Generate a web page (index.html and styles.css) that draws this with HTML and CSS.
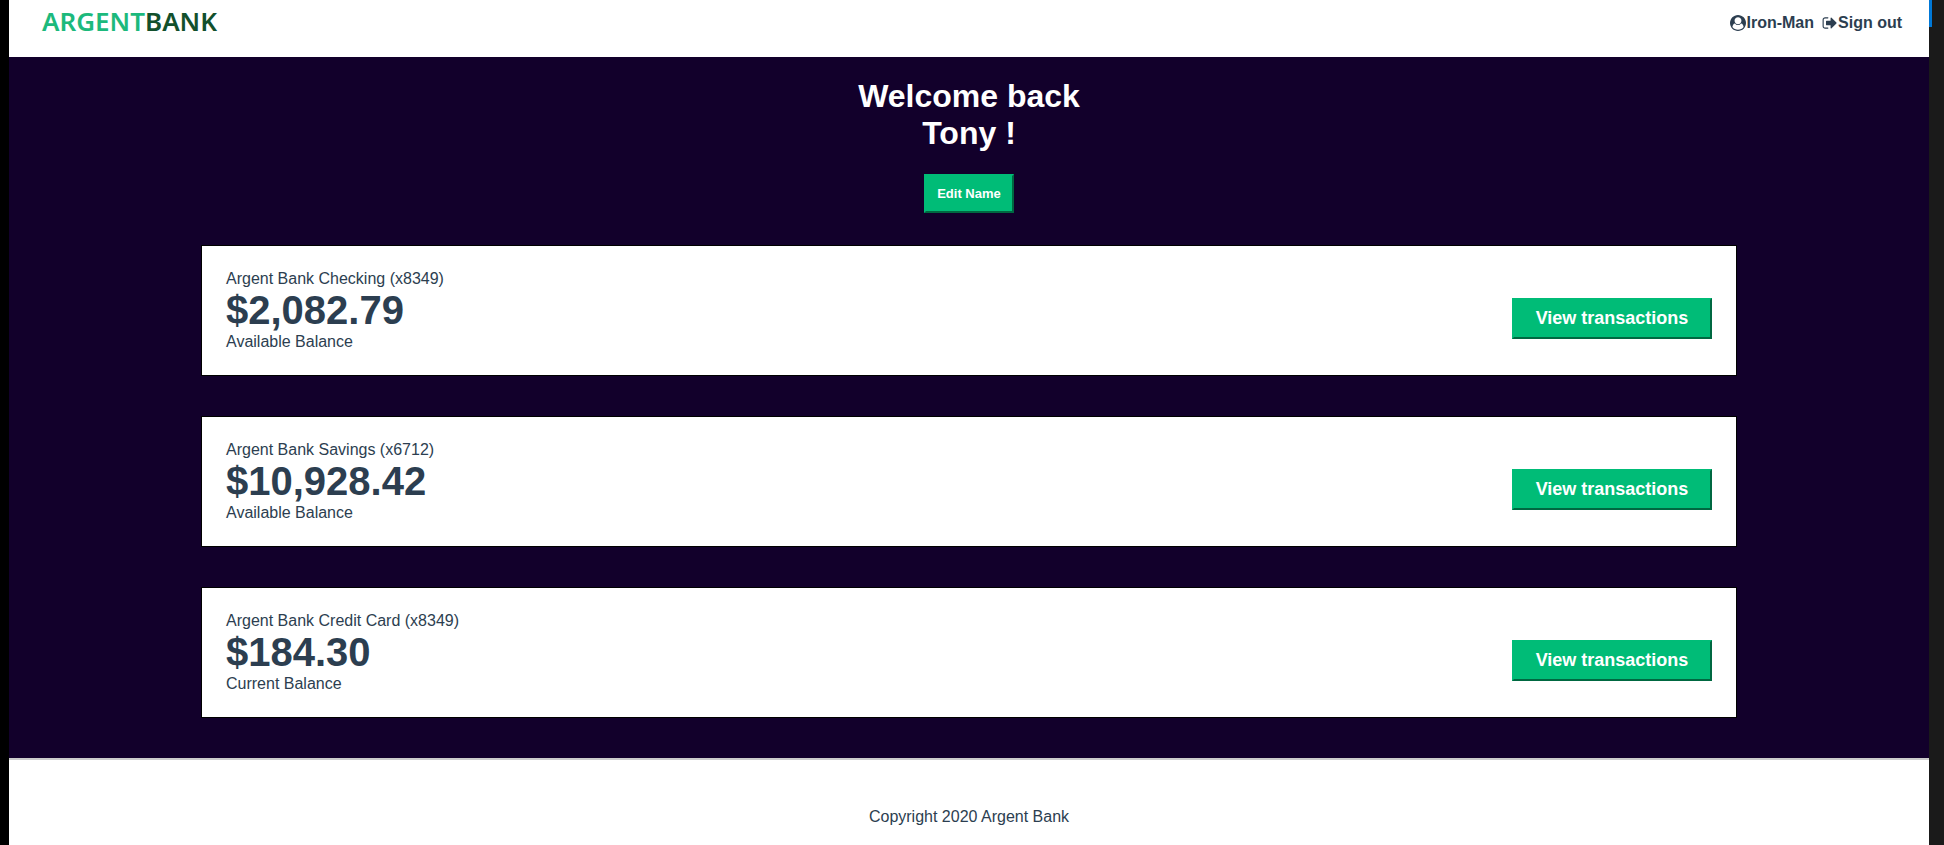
FILE: index.html
```html
<!DOCTYPE html>
<html lang="en">
<head>
<meta charset="utf-8">
<meta name="viewport" content="width=device-width, initial-scale=1">
<title>Argent Bank</title>
<link rel="stylesheet" href="styles.css">
</head>
<body>
<div class="page">
  <header class="main-nav">
    <a class="logo" href="#">ARGENT<span class="logo-dark">BANK</span></a>
    <nav class="nav-links">
      <a class="nav-item" href="#"><svg class="icon" viewBox="0 0 1792 1792" aria-hidden="true"><path d="M1523 1339q-22-155-87.500-257.500t-184.500-118.500q-67 74-159.500 115.500t-195.500 41.500-195.500-41.500-159.500-115.500q-119 16-184.500 118.500t-87.500 257.500q106 150 271 237.500t356 87.500 356-87.500 271-237.500zm-243-699q0-159-112.500-271.500t-271.500-112.500-271.500 112.500-112.500 271.500 112.500 271.500 271.500 112.500 271.500-112.500 112.500-271.500zm512 256q0 182-71 347.500t-190.500 286-285.500 191.500-349 71q-182 0-348-71t-286-191-191-286-71-348 71-348 191-286 286-191 348-71 348 71 286 191 191 286 71 348z"/></svg>Iron-Man</a>
      <a class="nav-item" href="#"><svg class="icon" viewBox="0 0 1792 1792" aria-hidden="true"><path d="M704 1440q0 4 1 20t.5 26.500-3 23.500-10 19.500-20.500 6.500h-320q-119 0-203.500-84.500t-84.500-203.500v-704q0-119 84.500-203.500t203.500-84.500h320q13 0 22.500 9.500t9.500 22.500q0 4 1 20t.5 26.500-3 23.500-10 19.500-20.500 6.500h-320q-66 0-113 47t-47 113v704q0 66 47 113t113 47h312l11.500 1 11.500 3 8 5.500 7 9 2 13.500zm928-544q0 26-19 45l-544 544q-19 19-45 19t-45-19-19-45v-288h-448q-26 0-45-19t-19-45v-384q0-26 19-45t45-19h448v-288q0-26 19-45t45-19 45 19l544 544q19 19 19 45z"/></svg>Sign out</a>
    </nav>
  </header>
  <main class="dashboard">
    <h1 class="welcome">Welcome back<br>Tony !</h1>
    <button class="button edit-button" type="button">Edit Name</button>
    <section class="account">
      <div class="account-info">
        <h2 class="account-title">Argent Bank Checking (x8349)</h2>
        <p class="amount">$2,082.79</p>
        <p class="description">Available Balance</p>
      </div>
      <button class="button transaction-button" type="button">View transactions</button>
    </section>
    <section class="account">
      <div class="account-info">
        <h2 class="account-title">Argent Bank Savings (x6712)</h2>
        <p class="amount">$10,928.42</p>
        <p class="description">Available Balance</p>
      </div>
      <button class="button transaction-button" type="button">View transactions</button>
    </section>
    <section class="account">
      <div class="account-info">
        <h2 class="account-title">Argent Bank Credit Card (x8349)</h2>
        <p class="amount">$184.30</p>
        <p class="description">Current Balance</p>
      </div>
      <button class="button transaction-button" type="button">View transactions</button>
    </section>
  </main>
  <footer class="footer">Copyright 2020 Argent Bank</footer>
</div>
<div class="edge"><div class="edge-mark"></div></div>
</body>
</html>
```
FILE: styles.css
```css
* {
  box-sizing: border-box;
}

body {
  margin: 0;
  min-height: 100vh;
  display: grid;
  grid-template-columns: 1fr 15px;
  padding-left: 9px;
  background: #000;
  color: #2c3e50;
  font-family: "Liberation Sans", Arial, sans-serif;
  font-size: 16px;
}

.page {
  display: flex;
  flex-direction: column;
  background: #fff;
}

.edge {
  background: #1a1a1a;
}

.edge-mark {
  width: 3px;
  height: 27px;
  background: #0078d7;
}

.main-nav {
  display: flex;
  justify-content: space-between;
  height: 57px;
  padding: 3px 27px 0 33px;
}

.logo {
  color: #1cb97c;
  font-family: "Noto Sans", sans-serif;
  font-size: 26px;
  font-weight: 600;
  line-height: 36px;
  text-decoration: none;
}

.logo-dark {
  color: #12502c;
}

.nav-links {
  display: flex;
  gap: 8px;
  height: 39px;
}

.nav-item {
  display: flex;
  align-items: center;
  color: inherit;
  font-weight: bold;
  text-decoration: none;
}

.icon {
  width: 16px;
  height: 16px;
  fill: currentColor;
}

.dashboard {
  display: flex;
  flex-direction: column;
  align-items: center;
  padding: 21px 0 40px;
  background: #12002b;
}

.welcome {
  margin: 0 0 22px;
  color: #fff;
  font-size: 32px;
  line-height: 37px;
  text-align: center;
}

.button {
  border: 2px outset #00bc77;
  background: #00bc77;
  color: #fff;
  font-family: inherit;
  font-weight: bold;
}

.edit-button {
  margin-bottom: 32px;
  padding: 10px 11px;
  font-size: 13px;
  line-height: 15px;
}

.account {
  display: flex;
  align-items: center;
  justify-content: space-between;
  width: 80%;
  padding: 24px;
  border: 1px solid #000;
  background: #fff;
}

.account + .account {
  margin-top: 40px;
}

.account-title,
.amount,
.description {
  margin: 0;
  font-size: 16px;
  font-weight: normal;
  line-height: 18px;
}

.amount {
  font-size: 40px;
  font-weight: bold;
  line-height: 45px;
}

.transaction-button {
  width: 200px;
  margin-top: 16px;
  padding: 8px;
  font-size: 18px;
  line-height: 21px;
}

.footer {
  flex: 1;
  padding: 48px 0 16px;
  border-top: 2px solid #ccc;
  line-height: 18px;
  text-align: center;
}
```
